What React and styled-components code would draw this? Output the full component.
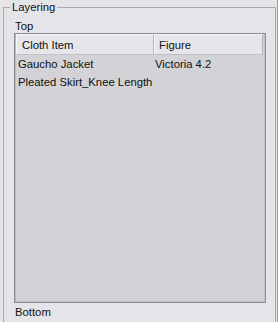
import React from 'react'
import styled, {createGlobalStyle} from 'styled-components'

const GlobalStyle = createGlobalStyle`
  html, body {
    margin: 0;
    padding: 0;
    background: #e5e5e9;
  }
  body {
    font-family: "Liberation Sans", Arial, sans-serif;
    font-size: 11.3px;
    color: #111;
  }
`
const Frame = styled.div`
  box-sizing: border-box;
  width: 278px;
  height: 322px;
  padding-left: 3px;
  padding-right: 2px;
  border-right: 1px solid #9c9ca2;
  overflow: hidden;
`
const Group = styled.fieldset`
  box-sizing: border-box;
  width: 273px;
  margin: 0;
  padding: 0 9px 0 10px;
  border: 1px solid #a9a9ae;
  border-bottom: none;
  min-height: 330px;
`
const Legend = styled.legend`
  margin-left: -4px;
  padding: 0 2px;
  line-height: 14px;
`
const Caption = styled.div`
  padding: ${p => p.$top}px 0 0 1px;
  line-height: 13px;
`
const List = styled.div`
  box-sizing: border-box;
  height: 270px;
  background: #d3d3d7;
  border: 1px solid #8c8c91;
  box-shadow: inset 1px 1px 0 #b9b9bd, inset -1px -1px 0 #c4c4c8;
  padding: 0 1px 1px 1px;
  display: flex;
  flex-direction: column;
`
const Row = styled.div`
  display: grid;
  grid-template-columns: 138px 1fr;
  height: 18px;
  align-items: center;
`
const HeaderRow = styled(Row)`
  height: 19px;
  background: #e6e6ea;
  border-top: 1px solid #f4f4f6;
  border-bottom: 1px solid #c2c2c6;
  margin-right: 1px;
`
const HeadCell = styled.div`
  height: 100%;
  display: flex;
  align-items: center;
  padding-left: ${p => p.$pad}px;
  border-left: 1px solid #f6f6f8;
  border-right: 1px solid #b4b4b8;
`
const Cell = styled.div`
  padding-left: ${p => p.$pad}px;
  white-space: nowrap;
`

const rows = [
  ['Gaucho Jacket', 'Victoria 4.2'],
  ['Pleated Skirt_Knee Length', '']
]

export default function App () {
  return (
    <Frame>
      <GlobalStyle />
      <Group>
        <Legend>Layering</Legend>
        <Caption $top={6}>Top</Caption>
        <List>
          <HeaderRow>
            <HeadCell $pad={5}>Cloth Item</HeadCell>
            <HeadCell $pad={4}>Figure</HeadCell>
          </HeaderRow>
          {rows.map(([item, fig]) => (
            <Row key={item}>
              <Cell $pad={2}>{item}</Cell>
              <Cell $pad={1}>{fig}</Cell>
            </Row>
          ))}
        </List>
        <Caption $top={3}>Bottom</Caption>
      </Group>
    </Frame>
  )
}
